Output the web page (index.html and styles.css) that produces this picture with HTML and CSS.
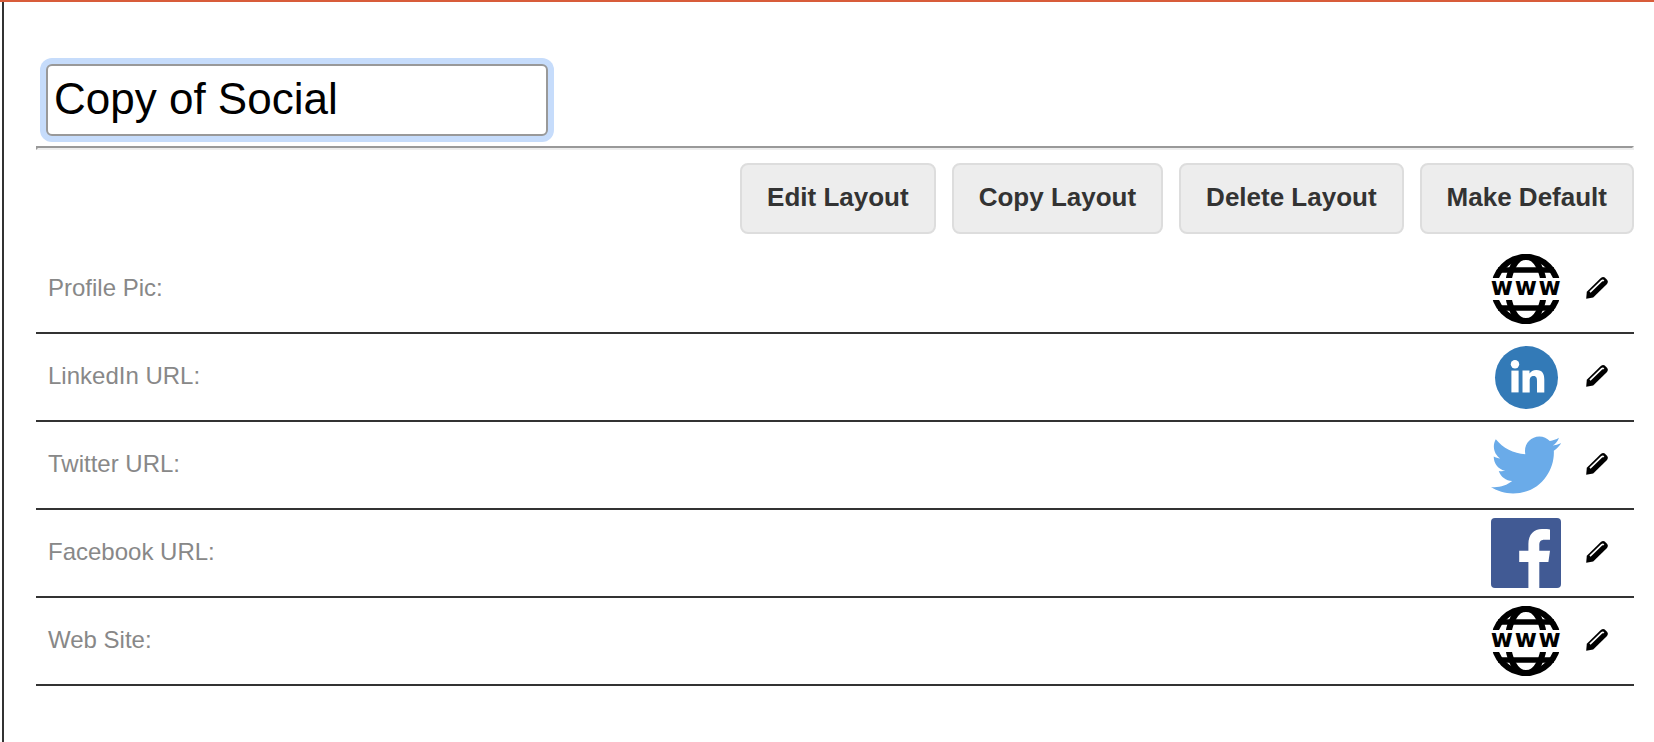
FILE: index.html
```html
<!DOCTYPE html>
<html lang="en">
<head>
  <meta charset="UTF-8" />
  <meta name="viewport" content="width=device-width, initial-scale=1.0" />
  <title>Copy of Social</title>
  <link rel="stylesheet" href="styles.css">
</head>
<body>
  <!-- shared icons -->
  <svg class="sprite" aria-hidden="true">
    <symbol id="icon-www" viewBox="0 0 70 70">
      <g fill="none" stroke="#000">
        <circle cx="35" cy="35" r="32" stroke-width="6" />
        <ellipse cx="35" cy="35" rx="18" ry="32.5" stroke-width="6" />
        <path d="M7 16h56M7 54h56" stroke-width="5.4" />
      </g>
      <rect y="24" width="70" height="22" fill="#fff" />
      <text class="www" x="-0.3 23.7 47.6" y="41">www</text>
    </symbol>
    <symbol id="icon-pencil" viewBox="0 0 22 22">
      <path d="M.2 21.8L.8 14.800 14.800 1.100Q16.800-.5 18.800.5L21.200 2.900Q22.600 4.800 21 7L7.200 20.600z" />
      <path d="M4 15.200L15.600 3.800Q16.800 2.800 17.800 3.800" fill="none" stroke="#fff" stroke-width="1.7" />
    </symbol>
  </svg>

  <main class="panel">
    <input class="title" type="text" value="Copy of Social" aria-label="Layout name" />
    <hr>

    <div class="actions">
      <button type="button">Edit Layout</button>
      <button type="button">Copy Layout</button>
      <button type="button">Delete Layout</button>
      <button type="button">Make Default</button>
    </div>

    <ul class="fields">
      <li>
        <span class="name">Profile Pic:</span>
        <svg class="icon"><use href="#icon-www" /></svg>
        <button class="edit" type="button" aria-label="Edit Profile Pic"><svg><use href="#icon-pencil" /></svg></button>
      </li>
      <li>
        <span class="name">LinkedIn URL:</span>
        <svg class="icon" viewBox="0 0 70 70">
          <circle cx="35.5" cy="35.5" r="31.5" fill="#337ab7" />
          <g fill="#fff">
            <circle cx="24" cy="22.3" r="4.2" />
            <rect x="20.4" y="28.6" width="7.2" height="21.8" />
            <path d="M31.5 28.6h7v3c1.2-2.1 3.6-3.6 6.8-3.6 6.3 0 8 4 8 9.700v12.700h-7.300V39.200c0-2.700-.4-5.100-3.400-5.100-3.100 0-3.900 2.200-3.900 5v11.300h-7.200z" />
          </g>
        </svg>
        <button class="edit" type="button" aria-label="Edit LinkedIn URL"><svg><use href="#icon-pencil" /></svg></button>
      </li>
      <li>
        <span class="name">Twitter URL:</span>
        <svg class="icon" viewBox="0 0 24 24">
          <path fill="#6aabe9" d="M23.954 4.569c-.885.389-1.83.654-2.825.775 1.014-.611 1.794-1.574 2.163-2.723-.951.555-2.005.959-3.127 1.184-.896-.959-2.173-1.559-3.591-1.559-2.717 0-4.92 2.203-4.92 4.917 0 .39.045.765.127 1.124C7.691 8.094 4.066 6.13 1.64 3.161c-.427.722-.666 1.561-.666 2.475 0 1.71.87 3.213 2.188 4.096-.807-.026-1.566-.248-2.228-.616v.061c0 2.385 1.693 4.374 3.946 4.827-.413.111-.849.171-1.296.171-.314 0-.615-.03-.916-.086.631 1.953 2.445 3.377 4.604 3.417-1.68 1.319-3.809 2.105-6.102 2.105-.39 0-.779-.023-1.17-.067 2.189 1.394 4.768 2.209 7.557 2.209 9.054 0 13.999-7.496 13.999-13.986 0-.209 0-.42-.015-.63.961-.689 1.8-1.56 2.46-2.548z" />
        </svg>
        <button class="edit" type="button" aria-label="Edit Twitter URL"><svg><use href="#icon-pencil" /></svg></button>
      </li>
      <li>
        <span class="name">Facebook URL:</span>
        <svg class="icon" viewBox="0 0 70 70">
          <rect width="70" height="70" rx="4" fill="#415a94" />
          <path fill="#fff" d="M37.4 70V44H28.200V32.800h9.200V26c0-9.500 5.500-15 13.600-15 3.600 0 6.600.2 8 .4v10.400h-5.200c-4.600 0-5.500 2.200-5.500 5.400v5.600H59L57.400 44h-9.100v26z" />
        </svg>
        <button class="edit" type="button" aria-label="Edit Facebook URL"><svg><use href="#icon-pencil" /></svg></button>
      </li>
      <li>
        <span class="name">Web Site:</span>
        <svg class="icon"><use href="#icon-www" /></svg>
        <button class="edit" type="button" aria-label="Edit Web Site"><svg><use href="#icon-pencil" /></svg></button>
      </li>
    </ul>
  </main>
</body>
</html>
```
FILE: styles.css
```css
* { margin: 0; padding: 0; box-sizing: border-box; }
body {
  font-family: "Liberation Sans", Arial, sans-serif;
  background: #fff;
  border-top: 2px solid #d85c3a;
  padding-left: 2px;
}
.sprite {
  display: none;
}
.www {
  font-family: "DejaVu Sans", sans-serif;
  font-size: 24px;
  font-weight: bold;
}
.panel {
  min-height: calc(100vh - 2px);
  border-left: 2px solid #333;
  padding: 62px 20px 20px 32px;
}
.title {
  display: block;
  width: 502px;
  max-width: 100%;
  height: 72px;
  margin-left: 10px;
  padding: 0 6px 2px;
  font-family: inherit;
  font-size: 44px;
  color: #000;
  background: #fff;
  border: 2px solid #999;
  border-radius: 6px;
  outline: none;
  box-shadow: 0 0 0 6px #c6dcfb;
}
hr {
  margin-top: 10px;
  border: 2px solid;
  border-color: #999 #eee #eee #999;
}
.actions {
  display: flex;
  flex-wrap: wrap;
  justify-content: flex-end;
  gap: 16px;
  margin: 13px 0 12px;
}
.actions button {
  height: 71px;
  padding: 0 25px 2px;
  font-family: inherit;
  font-size: 26px;
  font-weight: bold;
  color: #333;
  background: #ededed;
  border: 2px solid #ddd;
  border-radius: 8px;
  cursor: pointer;
}
.fields {
  list-style: none;
}
.fields li {
  display: flex;
  align-items: center;
  padding: 8px 26px 8px 12px;
  border-bottom: 2px solid #333;
}
.name {
  flex: 1;
  padding-bottom: 2px;
  font-size: 24px;
  color: #888;
}
.icon {
  width: 70px;
  height: 70px;
}
.edit {
  margin-left: 25px;
  padding-bottom: 3px;
  background: none;
  border: none;
  cursor: pointer;
}
.edit svg {
  display: block;
  width: 22px;
  height: 22px;
}
```
